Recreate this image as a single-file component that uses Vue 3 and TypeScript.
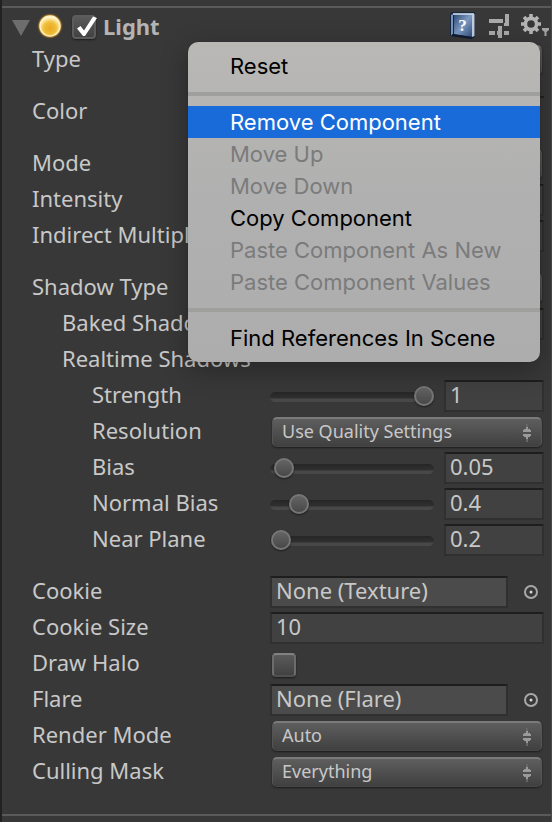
<script setup lang="ts">
import { ref } from 'vue'

type Kind = 'select' | 'number' | 'color' | 'slider' | 'object' | 'toggle' | 'none'

interface Field {
  id: string
  label: string
  kind: Kind
  value?: string
  indent?: number
  spaced?: boolean
  min?: number
  max?: number
}

interface MenuItem {
  label: string
  disabled?: boolean
  active?: boolean
}

const enabled = ref(true)
const halo = ref(false)

const fields = ref<Field[]>([
  { id: 'type', label: 'Type', kind: 'select', value: 'Directional' },
  { id: 'color', label: 'Color', kind: 'color', value: '#fff4d6', spaced: true },
  { id: 'mode', label: 'Mode', kind: 'select', value: 'Realtime', spaced: true },
  { id: 'intensity', label: 'Intensity', kind: 'number', value: '1' },
  { id: 'indirect', label: 'Indirect Multiplier', kind: 'number', value: '1' },
  { id: 'shadow-type', label: 'Shadow Type', kind: 'select', value: 'Soft Shadows', spaced: true },
  { id: 'baked', label: 'Baked Shadow Angle', kind: 'number', value: '0', indent: 1 },
  { id: 'realtime', label: 'Realtime Shadows', kind: 'none', indent: 1 },
  { id: 'strength', label: 'Strength', kind: 'slider', value: '1', min: 0, max: 1, indent: 2 },
  { id: 'resolution', label: 'Resolution', kind: 'select', value: 'Use Quality Settings', indent: 2 },
  { id: 'bias', label: 'Bias', kind: 'slider', value: '0.05', min: 0, max: 2, indent: 2 },
  { id: 'normal-bias', label: 'Normal Bias', kind: 'slider', value: '0.4', min: 0, max: 3, indent: 2 },
  { id: 'near-plane', label: 'Near Plane', kind: 'slider', value: '0.2', min: 0.1, max: 10, indent: 2 },
  { id: 'cookie', label: 'Cookie', kind: 'object', value: 'None (Texture)', spaced: true },
  { id: 'cookie-size', label: 'Cookie Size', kind: 'number', value: '10' },
  { id: 'halo', label: 'Draw Halo', kind: 'toggle' },
  { id: 'flare', label: 'Flare', kind: 'object', value: 'None (Flare)' },
  { id: 'render-mode', label: 'Render Mode', kind: 'select', value: 'Auto' },
  { id: 'culling-mask', label: 'Culling Mask', kind: 'select', value: 'Everything' },
])

const menuGroups: MenuItem[][] = [
  [{ label: 'Reset' }],
  [
    { label: 'Remove Component', active: true },
    { label: 'Move Up', disabled: true },
    { label: 'Move Down', disabled: true },
    { label: 'Copy Component' },
    { label: 'Paste Component As New', disabled: true },
    { label: 'Paste Component Values', disabled: true },
  ],
  [{ label: 'Find References In Scene' }],
]
</script>

<template>
  <main class="inspector">
    <section class="component">
      <header class="head">
        <button class="icon-button fold" aria-label="Collapse">
          <svg width="18" height="16" viewBox="0 0 18 16"><path d="M0 0H18L9 16Z" fill="#6d6d6d" /></svg>
        </button>
        <svg class="bulb" width="26" height="26" viewBox="0 0 26 26" aria-hidden="true">
          <defs>
            <radialGradient id="sun" cx="50%" cy="62%" r="55%">
              <stop offset="0" stop-color="#e9a925" />
              <stop offset="0.55" stop-color="#f0bd38" />
              <stop offset="0.8" stop-color="#f9da7c" />
              <stop offset="1" stop-color="#fff6d2" />
            </radialGradient>
          </defs>
          <circle cx="13" cy="13" r="12.5" fill="#c07a12" opacity="0.25" />
          <circle cx="13" cy="13" r="11.5" fill="#d8952a" opacity="0.6" />
          <circle cx="13" cy="13" r="10" fill="url(#sun)" stroke="#fff0c0" stroke-width="1.5" />
        </svg>
        <span class="check">
          <input id="enabled" v-model="enabled" type="checkbox" />
          <svg v-if="enabled" class="tick" width="24" height="24" viewBox="0 0 24 24" aria-hidden="true">
            <path d="M5 13.5L8.5 11L12 15.5L21 1.5L25 3L13 21H11Z" fill="#fff" />
          </svg>
        </span>
        <label class="title" for="enabled">Light</label>
        <div class="tools">
          <button class="icon-button" aria-label="Help">
            <svg width="28" height="28" viewBox="1 0 28 28">
              <defs>
                <linearGradient id="cover" x1="0" y1="0" x2="1" y2="1">
                  <stop offset="0" stop-color="#2c476f" />
                  <stop offset="0.5" stop-color="#7d9ac3" />
                  <stop offset="1" stop-color="#2f4f7c" />
                </linearGradient>
              </defs>
              <path d="M2 2L4 0H27V25L24 27L2 24Z" fill="#172740" />
              <path d="M3 3L5 2V24L3 23Z" fill="#7896bd" />
              <path d="M6 2H24V25L6 22Z" fill="url(#cover)" />
              <path d="M5 2H26" stroke="#d3deec" stroke-width="1.6" />
              <path d="M24 2H26.5V24L24 25Z" fill="#c3ccd8" />
              <path d="M4 23L24 26" stroke="#101c30" stroke-width="2" />
              <text x="14.5" y="19" class="book-mark" text-anchor="middle">?</text>
            </svg>
          </button>
          <button class="icon-button" aria-label="Presets">
            <svg width="20" height="24" viewBox="0 0 20 24" fill="#a9a9a9">
              <path d="M0 5H14V9H0Z" />
              <path d="M16 0H20V12H15V9H16Z" />
              <path d="M0 17H6V21H0Z" />
              <path d="M9 12H13V24H9V21H8V17H9Z" />
              <path d="M15 17H20V21H15Z" />
            </svg>
          </button>
          <button class="icon-button" aria-label="Component menu" aria-haspopup="menu" aria-expanded="true">
            <svg width="28" height="24" viewBox="0 0 28 24">
              <g transform="translate(10 10)">
                <circle r="5.6" fill="none" stroke="#b4b4b4" stroke-width="3.6" />
                <path
                  d="M0 -10V-6M0 10V6M-10 0H-6M10 0H6M-7 -7L-4.6 -4.6M7 7L4.6 4.6M-7 7L-4.6 4.6M7 -7L4.6 -4.6"
                  stroke="#b4b4b4"
                  stroke-width="3.6"
                />
              </g>
              <path d="M21 14H28V16L25.5 18V22H23.5V18L21 16Z" fill="#a4a4a4" />
            </svg>
          </button>
        </div>
      </header>

      <div class="fields">
        <div v-for="f in fields" :key="f.id" class="row" :class="{ spaced: f.spaced }">
          <span v-if="f.kind === 'none'" class="label indent-1">{{ f.label }}</span>
          <label v-else class="label" :class="'indent-' + (f.indent ?? 0)" :for="f.id">{{ f.label }}</label>

          <div v-if="f.kind === 'select'" class="popup">
            <select :id="f.id">
              <option>{{ f.value }}</option>
            </select>
            <svg class="arrows" width="10" height="20" viewBox="0 0 10 20" aria-hidden="true">
              <path d="M4 4H6V6H8V7H9V9H1V7H2V6H4Z M4 16H6V14H8V13H9V11H1V13H2V14H4Z" fill="#9a9a9a" />
              <path d="M4 1H6V4H4Z M4 16H6V19H4Z" fill="#666" />
            </svg>
          </div>

          <input v-else-if="f.kind === 'number'" :id="f.id" v-model="f.value" class="text" type="text" />

          <input v-else-if="f.kind === 'color'" :id="f.id" v-model="f.value" class="swatch" type="color" />

          <div v-else-if="f.kind === 'slider'" class="slider">
            <input :id="f.id" v-model="f.value" type="range" :min="f.min" :max="f.max" step="0.01" />
            <input v-model="f.value" class="text" type="text" :aria-label="f.label" />
          </div>

          <div v-else-if="f.kind === 'object'" class="object">
            <input :id="f.id" class="text object-text" type="text" :value="f.value" readonly />
            <button class="icon-button" :aria-label="'Select ' + f.label">
              <svg width="14" height="14" viewBox="0 0 14 14">
                <circle cx="7" cy="7" r="6" fill="none" stroke="#a8a8a8" stroke-width="2" />
                <circle cx="7" cy="7" r="1.5" fill="#d8d8d8" />
              </svg>
            </button>
          </div>

          <span v-else-if="f.kind === 'toggle'" class="check">
            <input :id="f.id" v-model="halo" type="checkbox" />
          </span>
        </div>
      </div>
    </section>

    <div class="menu" role="menu">
      <div v-for="(group, g) in menuGroups" :key="g" class="group" role="group">
        <button
          v-for="item in group"
          :key="item.label"
          class="item"
          :class="{ active: item.active }"
          role="menuitem"
          :disabled="item.disabled"
        >
          {{ item.label }}
        </button>
      </div>
    </div>
  </main>
</template>

<style>
body {
  background: #383838;
}
</style>

<style scoped>
* {
  box-sizing: border-box;
}

.inspector {
  position: relative;
  min-height: 100vh;
  padding-top: 6px;
  border-left: 2px solid #222;
  border-right: 1px solid #4a4a4a;
  background: #383838;
  color: #c8c8c8;
  font: 22px/32px 'Noto Sans', 'Open Sans', sans-serif;
}

.component {
  border-top: 2px solid #5a5a5a;
  border-bottom: 2px solid #5a5a5a;
  padding-bottom: 26px;
}

button,
input,
select {
  margin: 0;
  font: inherit;
  color: inherit;
}

.icon-button {
  display: flex;
  padding: 0;
  border: 0;
  background: none;
}

.head {
  display: flex;
  align-items: center;
  height: 36px;
  padding: 0 2px 0 10px;
}

.fold {
  padding-top: 4px;
}

.bulb {
  margin: 0 9px 0 7px;
}

.title {
  margin-left: 7px;
  font-weight: 700;
  color: #b4b4b4;
}

.tools {
  display: flex;
  align-items: center;
  gap: 12px;
  margin-left: auto;
}

.book-mark {
  font: 700 17px 'Liberation Serif', serif;
  fill: #fff;
}

.fields {
  display: flex;
  flex-direction: column;
  gap: 4px;
}

.row {
  display: grid;
  grid-template-columns: 238px minmax(0, 1fr);
  align-items: center;
  height: 32px;
  padding: 0 7px 0 30px;
}

.spaced {
  margin-top: 16px;
}

.label {
  align-self: start;
  line-height: 28px;
  white-space: nowrap;
}

.indent-1 {
  padding-left: 30px;
}

.indent-2 {
  padding-left: 60px;
}

.text {
  width: 100%;
  min-width: 0;
  height: 32px;
  padding: 0 4px 4px;
  border: 2px solid #303030;
  border-top-color: #1e1e1e;
  background: #414141;
  line-height: 24px;
  outline: 0;
}

.object-text {
  background: #4b4b4b;
}

.swatch {
  width: 100%;
  height: 32px;
  padding: 0 30px 0 0;
  border: 0;
  border-top: 2px solid #222;
  appearance: none;
  background: none;
}

.popup {
  position: relative;
  margin: 0 2px;
}

.popup select {
  display: block;
  width: 100%;
  height: 30px;
  padding: 0 30px 3px 9px;
  border: 1px solid #555;
  border-top: 2px solid #7b7b7b;
  border-bottom-color: #464646;
  border-radius: 5px;
  appearance: none;
  background: linear-gradient(#5e5e5e, #404040);
  box-shadow: 0 1px 2px #1c1c1c;
  font-size: 18px;
  line-height: 24px;
  outline: 0;
}

.arrows {
  position: absolute;
  top: 6px;
  right: 10px;
  pointer-events: none;
}

.slider {
  display: grid;
  grid-template-columns: minmax(0, 1fr) 100px;
  align-items: center;
  gap: 10px;
}

.slider input[type='range'] {
  width: 100%;
  height: 22px;
  padding-top: 2px;
  appearance: none;
  background: none;
  outline: 0;
}

.slider input[type='range']::-webkit-slider-runnable-track {
  height: 10px;
  border-radius: 5px;
  background: linear-gradient(#262626, #303030 60%, #484848 70%, #484848);
}

.slider input[type='range']::-webkit-slider-thumb {
  width: 20px;
  height: 20px;
  margin-top: -6px;
  border: 2px solid #767676;
  border-radius: 50%;
  appearance: none;
  background: linear-gradient(#646464, #484848);
  box-shadow: 0 1px 2px #1c1c1c;
}

.object {
  display: grid;
  grid-template-columns: minmax(0, 1fr) 14px;
  align-items: center;
  gap: 16px;
  padding-right: 6px;
}

.check {
  position: relative;
  display: flex;
  width: 24px;
  height: 24px;
}

.head .check,
.row .check {
  top: 1px;
}

.row .check {
  margin-left: 2px;
}

.check input {
  width: 24px;
  height: 24px;
  border: 2px solid #6c6c6c;
  border-top-color: #828282;
  border-bottom-color: #505050;
  border-radius: 4px;
  appearance: none;
  background: linear-gradient(#5a5a5a, #424242);
  box-shadow: 0 1px 2px #1c1c1c;
}

.head .check input {
  border-color: #5c5c5c;
}

.tick {
  position: absolute;
  inset: 0;
  overflow: visible;
  pointer-events: none;
}

.menu {
  position: absolute;
  top: 42px;
  right: 11px;
  width: 352px;
  padding: 8px 0;
  border-radius: 10px;
  background: linear-gradient(#b9b8b5, #b0b0b0 50%, #adadad);
  box-shadow: 0 0 1px #222, 0 8px 28px rgba(0, 0, 0, 0.3);
  color: #000;
  font: 22px/32px Inter, sans-serif;
}

.group + .group {
  margin-top: 10px;
  padding-top: 10px;
  border-top: 4px solid #9f9f9e;
}

.item {
  display: block;
  width: 100%;
  height: 32px;
  padding: 0 0 0 42px;
  border: 0;
  background: none;
  text-align: left;
}

.item:disabled {
  color: #7b7b7b;
}

.item.active {
  background: #196bd9;
  color: #fff;
}
</style>
